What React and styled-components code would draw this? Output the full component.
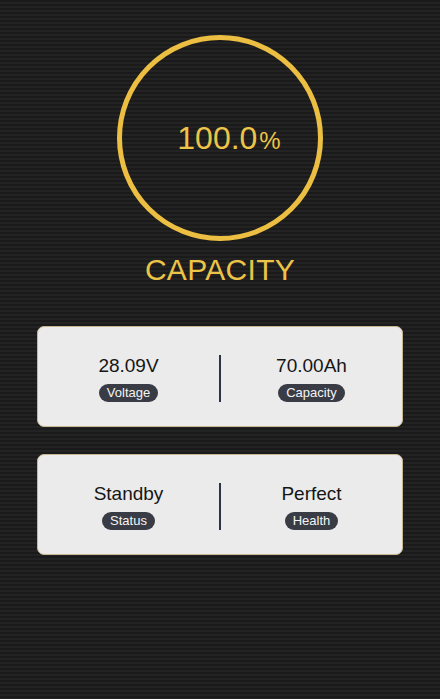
import React from 'react';
import styled, { createGlobalStyle } from 'styled-components';

const GlobalStyle = createGlobalStyle`
    html, body {
        margin: 0;
        padding: 0;
        background: #1b1b1b;
    }
    body {
        font-family: "Liberation Sans", Arial, sans-serif;
    }
`

const Page = styled.div`
    min-height: 699px;
    display: flex;
    flex-direction: column;
    align-items: center;
    background-color: #1b1b1b;
    background-image: repeating-linear-gradient(
        to bottom,
        #1a1a1a 0px,
        #1a1a1a 2px,
        #232323 2px,
        #232323 4px
    );
`

const Ring = styled.div`
    margin-top: 35px;
    width: 206px;
    height: 206px;
    box-sizing: border-box;
    border: 5px solid #ecbf42;
    border-radius: 50%;
    display: flex;
    align-items: center;
    justify-content: center;
`

const Percent = styled.div`
    color: #ecc447;
    font-size: 32px;
    padding-left: 18px;
    span {
        font-size: 24px;
        margin-left: 2px;
    }
`

const Title = styled.div`
    margin-top: 12px;
    color: #ecc447;
    font-size: 30px;
    letter-spacing: 0.3px;
`

const CardList = styled.div`
    margin-top: 39px;
    width: 366px;
    display: flex;
    flex-direction: column;
    gap: 27px;
`

const Card = styled.div`
    height: 101px;
    box-sizing: border-box;
    background: #ebebeb;
    border: 1px solid #c8b690;
    border-radius: 7px;
    display: flex;
    align-items: center;
`

const Cell = styled.div`
    flex: 1;
    display: flex;
    flex-direction: column;
    align-items: center;
    gap: 7px;
    padding-top: 4px;
`

const Value = styled.div`
    color: #151515;
    font-size: 19px;
`

const Pill = styled.div`
    background: #393c45;
    color: #f4f4f4;
    font-size: 13px;
    height: 18px;
    line-height: 18px;
    padding: 0 8px;
    border-radius: 9px;
`

const Divider = styled.div`
    width: 2px;
    height: 47px;
    background: #2c3346;
    margin-top: 3px;
`

const stats = [
    [{ value: '28.09V', label: 'Voltage' }, { value: '70.00Ah', label: 'Capacity' }],
    [{ value: 'Standby', label: 'Status' }, { value: 'Perfect', label: 'Health' }],
]

const App = () => {
    return (
        <Page>
            <GlobalStyle />
            <Ring>
                <Percent>100.0<span>%</span></Percent>
            </Ring>
            <Title>CAPACITY</Title>
            <CardList>
                {stats.map((row, i) => (
                    <Card key={i}>
                        <Cell>
                            <Value>{row[0].value}</Value>
                            <Pill>{row[0].label}</Pill>
                        </Cell>
                        <Divider />
                        <Cell>
                            <Value>{row[1].value}</Value>
                            <Pill>{row[1].label}</Pill>
                        </Cell>
                    </Card>
                ))}
            </CardList>
        </Page>
    )
}

export default App;
